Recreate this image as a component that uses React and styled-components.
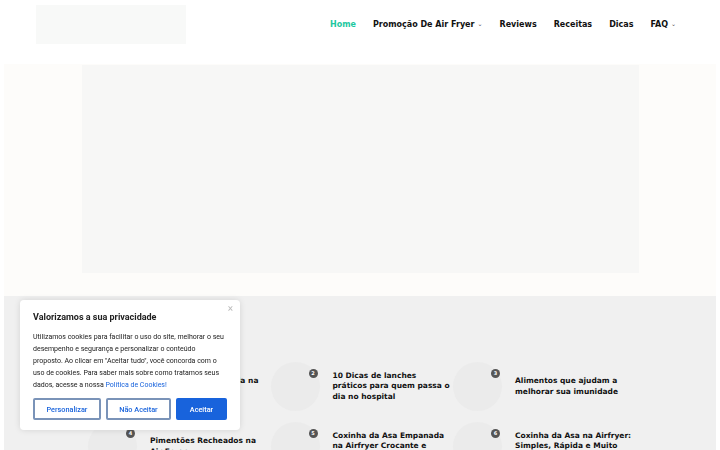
import styled, { createGlobalStyle } from 'styled-components';

const GlobalStyle = createGlobalStyle`
  html, body {
    margin: 0;
    padding: 0;
    background: #ffffff;
  }
  body {
    font-family: "DejaVu Sans", Verdana, sans-serif;
    overflow: hidden;
  }
`;

const Header = styled.header`
  display: flex;
  justify-content: space-between;
  align-items: flex-start;
  height: 64px;
  padding: 0 44px 0 36px;
`;

const Logo = styled.div`
  width: 150px;
  height: 39px;
  margin-top: 5px;
  background: #f8f9f8;
`;

const Nav = styled.nav`
  display: flex;
  gap: 17px;
  padding-top: 20px;
`;

const NavLink = styled.a`
  font-size: 8px;
  font-weight: bold;
  line-height: 10px;
  color: ${p => (p.$active ? '#1ec8a0' : '#111')};
  text-decoration: none;
  white-space: nowrap;
`;

const Caret = styled.span`
  display: inline-block;
  margin-left: 3px;
  font-size: 6px;
  font-weight: normal;
  color: #555;
  transform: translateY(-1px);
`;

const Hero = styled.section`
  display: flex;
  justify-content: center;
  align-items: flex-start;
  height: 232px;
  margin: 0 4px;
  background: #fdfcfa;
`;

const HeroBox = styled.div`
  width: 557px;
  height: 208px;
  margin-top: 1px;
  background: #f7f7f6;
`;

const Posts = styled.section`
  display: grid;
  grid-template-columns: repeat(3, 182.5px);
  row-gap: 11px;
  margin: 0 4px;
  padding: 66px 0 40px 84px;
  background: #f0f0f0;
`;

const Card = styled.article`
  display: flex;
  align-items: center;
  gap: 13px;
`;

const Thumb = styled.div`
  position: relative;
  flex: 0 0 49px;
  height: 49px;
  border-radius: 50%;
  background: #ebebeb;
`;

const Badge = styled.span`
  position: absolute;
  left: 38px;
  top: 7px;
  width: 9px;
  height: 9px;
  border-radius: 50%;
  background: #555;
  color: #fff;
  font-size: 5px;
  font-weight: bold;
  line-height: 9px;
  text-align: center;
`;

const Title = styled.h3`
  margin: 0;
  max-width: 120px;
  font-size: 7.5px;
  font-weight: bold;
  line-height: 10.6px;
  color: #111;
`;

const Banner = styled.div`
  position: fixed;
  left: 20px;
  bottom: 20px;
  width: 220px;
  box-sizing: border-box;
  padding: 11px 13px 10px 13px;
  background: #fff;
  border-radius: 4px;
  box-shadow: 0 0 6px rgba(0, 0, 0, 0.12);
  font-family: Roboto, "Liberation Sans", sans-serif;
`;

const Close = styled.button`
  position: absolute;
  right: 7px;
  top: 3px;
  border: 0;
  background: none;
  padding: 0;
  font-size: 10px;
  color: #bbb;
  font-family: Roboto, sans-serif;
`;

const BannerTitle = styled.h4`
  margin: 0 0 8px;
  font-size: 9px;
  font-weight: 700;
  line-height: 12px;
  color: #212121;
`;

const BannerText = styled.p`
  margin: 0;
  font-size: 7px;
  line-height: 12px;
  color: #212121;

  a {
    color: #1863dc;
    text-decoration: none;
  }
`;

const Buttons = styled.div`
  display: flex;
  gap: 5px;
  margin-top: 7px;
`;

const Button = styled.button`
  flex: ${p => p.$grow};
  height: 22px;
  padding: 0;
  border: 2px solid ${p => (p.$primary ? '#1863dc' : '#7a93b8')};
  border-radius: 2px;
  background: ${p => (p.$primary ? '#1863dc' : '#fff')};
  color: ${p => (p.$primary ? '#fff' : '#1863dc')};
  font-family: Roboto, "Liberation Sans", sans-serif;
  font-size: 7.3px;
  font-weight: 500;
`;

const posts = [
  'Batata Doce Recheada na Airfryer',
  '10 Dicas de lanches práticos para quem passa o dia no hospital',
  'Alimentos que ajudam a melhorar sua imunidade',
  'Pimentões Recheados na Air Fryer',
  'Coxinha da Asa Empanada na Airfryer Crocante e Sequinha',
  'Coxinha da Asa na Airfryer: Simples, Rápida e Muito Saborosa',
];

export default function App() {
  return (
    <>
      <GlobalStyle />
      <Header>
        <Logo />
        <Nav>
          <NavLink $active href="#">Home</NavLink>
          <NavLink href="#">Promoção De Air Fryer<Caret>⌄</Caret></NavLink>
          <NavLink href="#">Reviews</NavLink>
          <NavLink href="#">Receitas</NavLink>
          <NavLink href="#">Dicas</NavLink>
          <NavLink href="#">FAQ<Caret>⌄</Caret></NavLink>
        </Nav>
      </Header>
      <Hero>
        <HeroBox />
      </Hero>
      <Posts>
        {posts.map((t, i) => (
          <Card key={t}>
            <Thumb>
              <Badge>{i + 1}</Badge>
            </Thumb>
            <Title>{t}</Title>
          </Card>
        ))}
      </Posts>
      <Banner>
        <Close>×</Close>
        <BannerTitle>Valorizamos a sua privacidade</BannerTitle>
        <BannerText>
          Utilizamos cookies para facilitar o uso do site, melhorar o seu desempenho e segurança e
          personalizar o conteúdo proposto. Ao clicar em "Aceitar tudo", você concorda com o uso de
          cookies. Para saber mais sobre como tratamos seus dados, acesse a nossa{' '}
          <a href="#">Política de Cookies!</a>
        </BannerText>
        <Buttons>
          <Button $grow="68">Personalizar</Button>
          <Button $grow="65">Não Aceitar</Button>
          <Button $grow="50" $primary>Aceitar</Button>
        </Buttons>
      </Banner>
    </>
  );
}
